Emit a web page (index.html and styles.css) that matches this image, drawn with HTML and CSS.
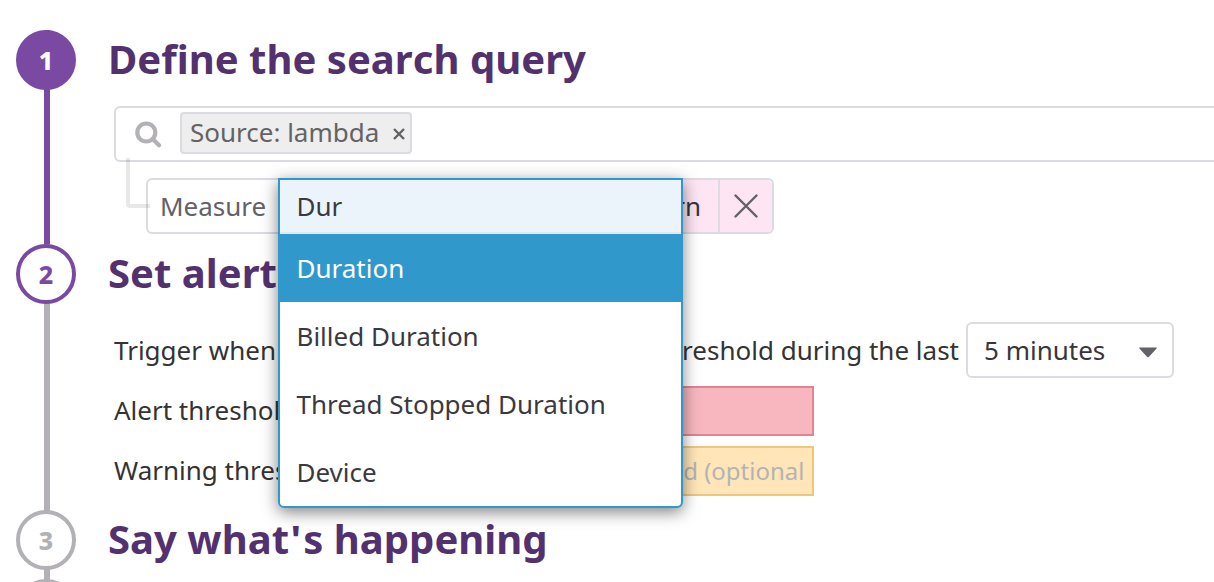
FILE: index.html
```html
<!DOCTYPE html>
<html lang="en">
<head>
<meta charset="utf-8">
<title>New alert</title>
<link rel="stylesheet" href="styles.css">
</head>
<body>
<main class="steps">
  <section class="step step-query">
    <div class="rail rail-done"><span class="marker marker-done">1</span></div>
    <div class="content">
      <h2 class="title">Define the search query</h2>
      <div class="search">
        <svg class="search-icon" width="28" height="28" viewBox="0 0 28 28" fill="none" stroke="#b3b0b6">
          <circle cx="11.3" cy="12.5" r="9" stroke-width="4.2"/>
          <path d="M18 19.2 L24 25.2" stroke-width="4.2" stroke-linecap="round"/>
        </svg>
        <span class="tag">Source: lambda
          <svg class="tag-close" width="12" height="12" viewBox="0 0 12 12" fill="none" stroke="#636363" stroke-width="2.4"><path d="M1 1 L11 11 M11 1 L1 11"/></svg>
        </span>
      </div>
      <div class="measure-row">
        <span class="branch"></span>
        <div class="measure">
          <span class="measure-label">Measure</span>
          <span class="measure-return">return</span>
          <span class="measure-remove">
            <svg width="24" height="24" viewBox="0 0 24 24" fill="none" stroke="#636167" stroke-width="2.4" stroke-linecap="round"><path d="M1.5 1.5 L22.5 22.5 M22.5 1.5 L1.5 22.5"/></svg>
          </span>
        </div>
        <div class="dropdown">
          <div class="dropdown-input">Dur</div>
          <div class="option option-active">Duration</div>
          <div class="option">Billed Duration</div>
          <div class="option">Thread Stopped Duration</div>
          <div class="option">Device</div>
        </div>
      </div>
    </div>
  </section>

  <section class="step step-conditions">
    <div class="rail"><span class="marker marker-current">2</span></div>
    <div class="content">
      <h2 class="title">Set alert</h2>
      <div class="trigger">
        <span>Trigger when</span>
        <span class="trigger-window">threshold during the last</span>
        <span class="select">5 minutes
          <svg width="18" height="11" viewBox="0 0 18 11"><path d="M1 .5 H17 Q18.2 .8 17.4 1.8 L10 9.8 Q9 10.7 8 9.8 L.6 1.8 Q-.2 .8 1 .5Z" fill="#636167"/></svg>
        </span>
      </div>
      <div class="threshold">
        <span class="threshold-label">Alert threshold</span>
        <span class="field field-alert"></span>
      </div>
      <div class="threshold">
        <span class="threshold-label">Warning threshold</span>
        <span class="field field-warning">threshold (optional</span>
      </div>
    </div>
  </section>

  <section class="step step-message">
    <div class="rail"><span class="marker">3</span></div>
    <div class="content"><h2 class="title">Say what<span class="apostrophe">'</span>s happening</h2></div>
  </section>

  <section class="step">
    <div class="rail"><span class="marker"></span></div>
  </section>
</main>
</body>
</html>
```
FILE: styles.css
```css
* { box-sizing: border-box; }
html, body { height: 100%; overflow: hidden; }
body {
  margin: 0;
  background: #fff;
  color: #333;
  font: 26px/36px "Noto Sans", sans-serif;
}
svg { display: block; flex: none; }

.steps { height: 100%; padding: 30px 0 0 16px; overflow: hidden; }
.step { display: flex; }
.step-query { height: 214px; }
.step-conditions { height: 266px; }
.step-message { height: 69px; }

.rail {
  flex: none;
  width: 60px;
  background: linear-gradient(#b3b0b6, #b3b0b6) 28px 0 / 6px 100% no-repeat;
}
.rail-done { background-image: linear-gradient(#7a4aa3, #7a4aa3); }
.marker {
  display: flex;
  align-items: center;
  justify-content: center;
  height: 60px;
  border: 4px solid #b3b0b6;
  border-radius: 50%;
  background: #fff;
  color: #b3b0b6;
  font-size: 25px;
  font-weight: 800;
}
.marker-done { border-color: #7a4aa3; background: #7a4aa3; color: #fff; }
.marker-current { border-color: #7a4aa3; color: #7a4aa3; }

.content { flex: 1; min-width: 0; padding-left: 38px; }
.title {
  margin: 0 0 0 -6px;
  height: 60px;
  color: #53316f;
  font-size: 40px;
  font-weight: 700;
  font-kerning: none;
  letter-spacing: .03px;
  line-height: 58px;
  white-space: nowrap;
}
.apostrophe { margin: 0 2px 0 1.5px; }

.search {
  display: flex;
  align-items: center;
  gap: 17px;
  height: 56px;
  margin: 16px -10px 16px 0;
  padding: 0 19px 2px;
  border: 2px solid #dcdbe1;
  border-radius: 6px;
}
.search-icon { margin-top: 2px; }
.tag {
  display: flex;
  align-items: center;
  gap: 14px;
  height: 42px;
  padding: 0 5px 2px 8px;
  border: 2px solid #dcdbe1;
  border-radius: 4px;
  background: #eee;
  color: #636363;
}
.tag-close { margin-top: 3px; }

.measure-row { position: relative; height: 56px; padding-left: 32px; }
.branch {
  position: absolute;
  left: 12px;
  top: -20px;
  width: 24px;
  height: 50px;
  border: solid rgba(0, 0, 0, .09);
  border-width: 0 0 4px 4px;
  border-bottom-left-radius: 4px;
}
.measure {
  display: flex;
  width: 628px;
  height: 56px;
  border: 2px solid #dcdbe1;
  border-radius: 6px;
  overflow: hidden;
  line-height: 53px;
}
.measure-label { flex: 1; padding-left: 12px; color: #636167; }
.measure-return {
  width: 120px;
  padding-right: 17px;
  border-right: 2px solid #dcdbe1;
  background: #fde5f3;
  color: #37333c;
  text-align: right;
}
.measure-remove {
  display: grid;
  place-items: center;
  width: 52px;
  background: #fde5f3;
}

.dropdown {
  position: absolute;
  z-index: 2;
  left: 164px;
  top: 0;
  width: 405px;
  height: 330px;
  border: 2px solid #3198cc;
  border-radius: 0 0 6px 6px;
  background: #fff;
  box-shadow: 0 4px 16px rgba(0, 0, 0, .5);
  color: #3a3a3e;
}
.dropdown-input {
  height: 54px;
  padding-left: 16.5px;
  border-bottom: 2px solid #e5e7eb;
  background: #ebf4fb;
  line-height: 53px;
}
.option { height: 68px; padding-left: 16.5px; line-height: 69px; }
.option-active { background: #3198cc; color: #fff; }

.trigger {
  display: flex;
  align-items: center;
  width: 1060px;
  height: 56px;
  margin: 18px 0 8px;
}
.trigger-window { margin: 0 7px 0 auto; }
.select {
  display: flex;
  align-items: center;
  justify-content: space-between;
  width: 208px;
  height: 56px;
  padding: 0 15px 0 16px;
  border: 2px solid #dcdbe1;
  border-radius: 6px;
  color: #37363b;
}
.select svg { margin-top: 5px; }

.threshold {
  display: flex;
  align-items: center;
  justify-content: space-between;
  width: 700px;
  height: 50px;
  margin-bottom: 10px;
}
.threshold-label { padding-bottom: 2px; }
.field {
  width: 360px;
  height: 50px;
  padding-right: 7.5px;
  border: 2px solid;
  font-size: 24px;
  line-height: 46px;
  text-align: right;
  white-space: nowrap;
}
.field-alert { border-color: #df8490; background: #f8b7be; }
.field-warning { border-color: #f0c778; background: #ffe5b8; color: #b3b3b3; }
```
